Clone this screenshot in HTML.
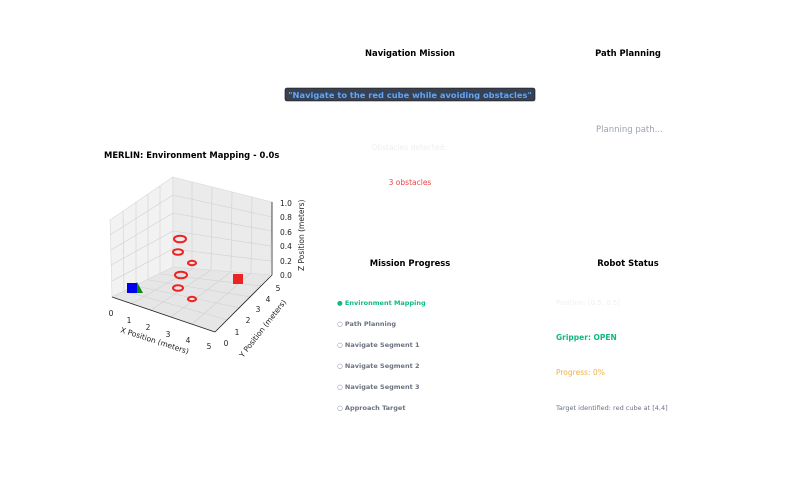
<!DOCTYPE html>
<html><head><style>
html,body{margin:0;padding:0;background:#fff;width:800px;height:500px;overflow:hidden}
svg{display:block;font-family:"DejaVu Sans","Liberation Sans",sans-serif}
</style></head><body>
<svg width="800" height="500" viewBox="0 0 800 500">
<rect width="800" height="500" fill="#fff"/>
<polygon points="110,220 173,177 173,267 112,297" fill="#f2f2f2" stroke="#d8d8d8" stroke-width="0.6"/>
<polygon points="173,177 272,202 270,275 173,267" fill="#ebebeb" stroke="#d8d8d8" stroke-width="0.6"/>
<polygon points="173,267 270,275 215,332 112,297" fill="#e6e6e6" stroke="#d8d8d8" stroke-width="0.6"/>
<g stroke="#d0d0d0" stroke-width="0.6" fill="none">
<line x1="123" y1="211" x2="124" y2="291"/><line x1="136" y1="202" x2="136" y2="286"/><line x1="148" y1="194" x2="148" y2="280"/><line x1="160" y1="186" x2="160" y2="274"/>
<line x1="110" y1="235" x2="173" y2="195"/><line x1="111" y1="250" x2="173" y2="213"/><line x1="111" y1="265" x2="173" y2="231"/><line x1="112" y1="281" x2="173" y2="249"/>
<line x1="192" y1="182" x2="192" y2="269"/><line x1="212" y1="187" x2="211" y2="270"/><line x1="232" y1="192" x2="231" y2="272"/><line x1="252" y1="197" x2="251" y2="273"/>
<line x1="173" y1="195" x2="272" y2="217"/><line x1="173" y1="213" x2="272" y2="231"/><line x1="173" y1="231" x2="271" y2="246"/><line x1="173" y1="249" x2="271" y2="261"/>
<line x1="192" y1="269" x2="131" y2="304"/><line x1="211" y1="270" x2="151" y2="310"/><line x1="231" y1="272" x2="171" y2="317"/><line x1="251" y1="273" x2="192" y2="324"/>
<line x1="161" y1="274" x2="261" y2="286"/><line x1="149" y1="280" x2="251" y2="297"/><line x1="136" y1="286" x2="240" y2="308"/><line x1="124" y1="291" x2="228" y2="320"/>
</g>
<g stroke="#222" stroke-width="0.8" fill="none">
<line x1="112" y1="297" x2="215" y2="332"/><line x1="215" y1="332" x2="272" y2="275"/><line x1="272" y1="202" x2="272" y2="275"/>
</g>
<g fill="none" stroke="#ee2222" stroke-width="2">
<ellipse cx="180" cy="239" rx="6" ry="3.3"/><ellipse cx="178" cy="252" rx="5" ry="2.8"/><ellipse cx="192" cy="263" rx="4" ry="2.2"/>
<ellipse cx="181" cy="275" rx="6" ry="3.3"/><ellipse cx="178" cy="288" rx="5" ry="2.8"/><ellipse cx="192" cy="299" rx="4" ry="2.2"/>
</g>
<rect x="233" y="274" width="10" height="10" fill="#ee2222"/>
<polygon points="137,282 143,293 131,293" fill="#118811"/>
<rect x="127" y="283" width="10" height="10" fill="#0000ee"/>
<g font-size="7.5" fill="#222" text-anchor="middle">
<text x="111" y="316">0</text><text x="129" y="323">1</text><text x="148" y="330">2</text><text x="168" y="337">3</text><text x="188" y="343">4</text><text x="209" y="349">5</text>
<text x="226" y="346">0</text><text x="237" y="335">1</text><text x="248" y="323">2</text><text x="258" y="312">3</text><text x="268" y="302">4</text><text x="278" y="291">5</text>
</g>
<g font-size="7.5" fill="#222">
<text x="280" y="206">1.0</text><text x="280" y="220">0.8</text><text x="280" y="235">0.6</text><text x="280" y="249">0.4</text><text x="280" y="264">0.2</text><text x="280" y="278">0.0</text>
<text transform="translate(120,332) rotate(18)" font-size="7.5">X Position (meters)</text>
<text transform="translate(243,358) rotate(-52)" font-size="7.5">Y Position (meters)</text>
<text transform="translate(304,271) rotate(-90)" font-size="7.5">Z Position (meters)</text>
</g>
<text x="104" y="158" font-size="8.4" font-weight="bold" fill="#000">MERLIN: Environment Mapping - 0.0s</text>
<g font-size="8.4" font-weight="bold" fill="#000" text-anchor="middle">
<text x="410" y="56">Navigation Mission</text><text x="628" y="56">Path Planning</text>
<text x="410" y="266">Mission Progress</text><text x="628" y="266">Robot Status</text>
</g>
<rect x="285" y="88" width="250" height="13" rx="2" fill="#374151" stroke="#111" stroke-width="0.6"/>
<text x="410" y="98" font-size="8.3" font-weight="bold" fill="#60a5fa" text-anchor="middle">"Navigate to the red cube while avoiding obstacles"</text>
<text x="596" y="132" font-size="8.5" fill="#9ca3af">Planning path...</text>
<text x="409" y="150" font-size="7.5" fill="#eceef1" text-anchor="middle">Obstacles detected:</text>
<text x="410" y="185" font-size="7.5" fill="#ef4444" text-anchor="middle">3 obstacles</text>
<g font-size="6.5" font-weight="bold" fill="#6b7280">
<text x="337" y="305" fill="#10b981">● Environment Mapping</text>
<text x="337" y="326">○ Path Planning</text>
<text x="337" y="347">○ Navigate Segment 1</text>
<text x="337" y="368">○ Navigate Segment 2</text>
<text x="337" y="389">○ Navigate Segment 3</text>
<text x="337" y="410">○ Approach Target</text>
</g>
<text x="556" y="305" font-size="7" fill="#eef0f2">Position: [0.5, 0.5]</text>
<text x="556" y="340" font-size="7.5" font-weight="bold" fill="#10b981">Gripper: OPEN</text>
<text x="556" y="375" font-size="7.5" fill="#f5b041">Progress: 0%</text>
<text x="556" y="410" font-size="6.5" fill="#6b7280">Target identified: red cube at [4,4]</text>
</svg>
</body></html>
